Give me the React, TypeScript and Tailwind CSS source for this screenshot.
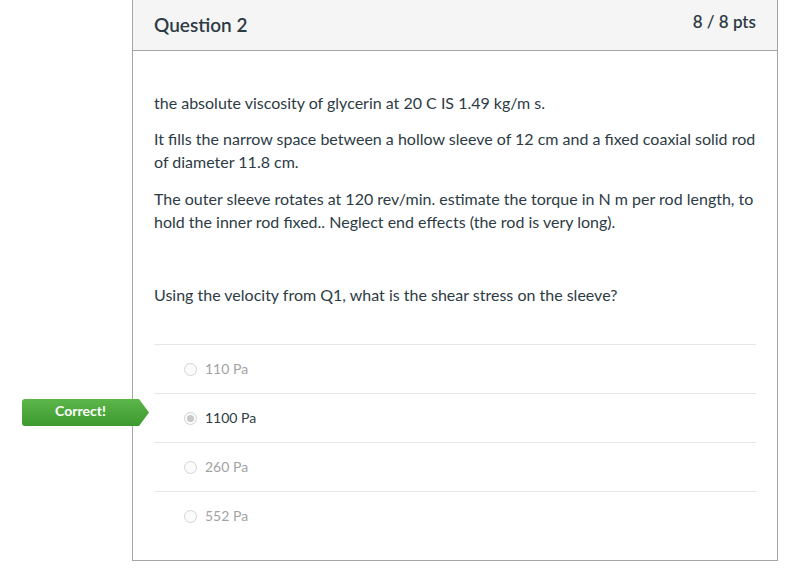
import React from "react";

const answers = [
  { label: "110 Pa", selected: false },
  { label: "1100 Pa", selected: true },
  { label: "260 Pa", selected: false },
  { label: "552 Pa", selected: false },
];

function Radio({ selected }: { selected: boolean }) {
  return (
    <span className="w-[13px] h-[13px] rounded-full border border-[#d4d4d4] bg-[#fbfbfb] flex items-center justify-center shrink-0">
      {selected && <span className="w-[7px] h-[7px] rounded-full bg-[#c8c8c8]" />}
    </span>
  );
}

export default function App() {
  return (
    <div
      className="w-[797px] h-[571px] bg-white relative"
      style={{ fontFamily: "Lato, 'Open Sans', sans-serif" }}
    >
      <div className="ml-[132px] w-[646px] h-[561px] border-x border-b border-[#a5a5a5] flex flex-col">
        <div className="h-[51px] bg-[#f5f5f5] border-b border-[#a5a5a5] flex items-start justify-between px-[21px] shrink-0">
          <div className="text-[19px] font-semibold text-[#2d3b45] mt-[11px]">Question 2</div>
          <div className="text-[17px] font-semibold text-[#2d3b45] mt-[9px]">8 / 8 pts</div>
        </div>
        <div className="px-[21px] pt-[40px] text-[16px] leading-[23px] text-[#2d3b45]">
          <p>the absolute viscosity of glycerin at 20 C IS 1.49 kg/m s.</p>
          <p className="mt-[13px]">
            It fills the narrow space between a hollow sleeve of 12 cm and a fixed coaxial solid rod of diameter 11.8 cm.
          </p>
          <p className="mt-[14px]">
            The outer sleeve rotates at 120 rev/min. estimate the torque in N m per rod length, to hold the inner rod fixed.. Neglect end effects (the rod is very long).
          </p>
          <p className="mt-[50px]">Using the velocity from Q1, what is the shear stress on the sleeve?</p>
          <div className="mt-[38px]">
            {answers.map((a) => (
              <div
                key={a.label}
                className="relative h-[49px] border-t border-[#e6e6e6] flex items-center pl-[30px] gap-[8px]"
              >
                <Radio selected={a.selected} />
                <span
                  className={
                    "text-[14px] pb-[1px] " + (a.selected ? "text-[#2d3b45]" : "text-[#a3a3a3]")
                  }
                >
                  {a.label}
                </span>
                {a.selected && (
                  <div className="absolute left-[-132px] top-[5px] h-[27px] w-[127px] flex">
                    <div className="w-[117px] h-full rounded-l-[3px] bg-gradient-to-b from-[#5cb64a] to-[#3d9a2e] flex items-center justify-center text-white text-[14px] font-bold pb-[4px]">
                      Correct!
                    </div>
                    <svg width="10" height="27" viewBox="0 0 10 27" className="block">
                      <defs>
                        <linearGradient id="g" x1="0" y1="0" x2="0" y2="1">
                          <stop offset="0" stopColor="#5cb64a" />
                          <stop offset="1" stopColor="#3d9a2e" />
                        </linearGradient>
                      </defs>
                      <polygon points="0,0 10,13.5 0,27" fill="url(#g)" />
                    </svg>
                  </div>
                )}
              </div>
            ))}
          </div>
        </div>
      </div>
    </div>
  );
}
